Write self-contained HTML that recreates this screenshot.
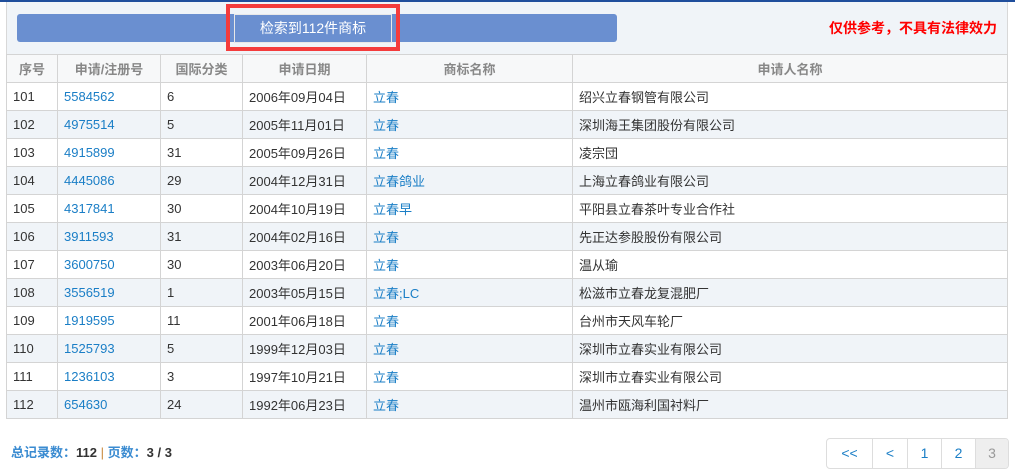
<!DOCTYPE html><html><head><meta charset="utf-8"><style>
*{box-sizing:border-box;margin:0;padding:0}
body{width:1015px;height:474px;background:#fff;font-family:"Liberation Sans","Noto Sans CJK SC",sans-serif;font-size:13px;color:#333;position:relative;overflow:hidden}
.topline{position:absolute;left:0;top:0;width:1015px;height:2px;background:#1f4e9c}
.panel{position:absolute;left:6px;top:2px;width:1002px;height:53px;background:#f0f4f8;border-left:1px solid #d8d8d8;border-right:1px solid #d8d8d8}
.bar{position:absolute;left:17px;top:14px;width:600px;height:28px;background:#6a8fd0;border-radius:3px}
.red{position:absolute;left:226px;top:4px;width:174px;height:47px;border:4px solid #f43c3c}
.red span{position:absolute;left:4px;top:6px;width:158px;height:29px;border:1px solid #e8e8e8;color:#fff;font-size:14px;text-align:center;line-height:27px}
.note{position:absolute;left:829px;top:18px;color:#f00;font-weight:bold;font-size:14px}
table{position:absolute;left:6px;top:54px;width:1002px;border-collapse:collapse}
td,th{border:1px solid #d4d4d4;height:28px;padding:0 6px;text-align:left;white-space:nowrap}
th{background:#f7f8f9;color:#888;font-weight:bold;text-align:center;height:28px}
tr:nth-child(odd) td{background:#f0f4f8}
a{color:#1a7ec6;text-decoration:none}
.foot{position:absolute;left:11px;top:442px;color:#3a8bd1;font-weight:bold;font-size:13px}
.foot b{color:#333}
.foot i{font-style:normal;color:#c8883c;font-weight:normal}
.pg{position:absolute;left:826px;top:438px;height:31px;display:flex;border:1px solid #ddd;border-radius:4px;overflow:hidden}
.pg span{border-left:1px solid #ddd;color:#1a7ec6;text-align:center;line-height:29px;font-size:14px}
.pg span:first-child{border-left:none}
</style></head><body>
<div class="topline"></div>
<div class="panel"></div>
<div class="bar"></div>
<div class="red"><span>检索到112件商标</span></div>
<div class="note">仅供参考，不具有法律效力</div>
<table>
<colgroup><col style="width:51px"><col style="width:103px"><col style="width:82px"><col style="width:124px"><col style="width:206px"><col></colgroup>
<tr><th>序号</th><th>申请/注册号</th><th>国际分类</th><th>申请日期</th><th>商标名称</th><th>申请人名称</th></tr>
<tr><td>101</td><td><a>5584562</a></td><td>6</td><td>2006年09月04日</td><td><a>立春</a></td><td>绍兴立春钢管有限公司</td></tr>
<tr><td>102</td><td><a>4975514</a></td><td>5</td><td>2005年11月01日</td><td><a>立春</a></td><td>深圳海王集团股份有限公司</td></tr>
<tr><td>103</td><td><a>4915899</a></td><td>31</td><td>2005年09月26日</td><td><a>立春</a></td><td>凌宗団</td></tr>
<tr><td>104</td><td><a>4445086</a></td><td>29</td><td>2004年12月31日</td><td><a>立春鸽业</a></td><td>上海立春鸽业有限公司</td></tr>
<tr><td>105</td><td><a>4317841</a></td><td>30</td><td>2004年10月19日</td><td><a>立春早</a></td><td>平阳县立春茶叶专业合作社</td></tr>
<tr><td>106</td><td><a>3911593</a></td><td>31</td><td>2004年02月16日</td><td><a>立春</a></td><td>先正达参股股份有限公司</td></tr>
<tr><td>107</td><td><a>3600750</a></td><td>30</td><td>2003年06月20日</td><td><a>立春</a></td><td>温从瑜</td></tr>
<tr><td>108</td><td><a>3556519</a></td><td>1</td><td>2003年05月15日</td><td><a>立春;LC</a></td><td>松滋市立春龙复混肥厂</td></tr>
<tr><td>109</td><td><a>1919595</a></td><td>11</td><td>2001年06月18日</td><td><a>立春</a></td><td>台州市天风车轮厂</td></tr>
<tr><td>110</td><td><a>1525793</a></td><td>5</td><td>1999年12月03日</td><td><a>立春</a></td><td>深圳市立春实业有限公司</td></tr>
<tr><td>111</td><td><a>1236103</a></td><td>3</td><td>1997年10月21日</td><td><a>立春</a></td><td>深圳市立春实业有限公司</td></tr>
<tr><td>112</td><td><a>654630</a></td><td>24</td><td>1992年06月23日</td><td><a>立春</a></td><td>温州市瓯海利国衬料厂</td></tr>
</table>
<div class="foot">总记录数：<b>112</b> <i>|</i> 页数：<b>3 / 3</b></div>
<div class="pg"><span style="width:45px">&lt;&lt;</span><span style="width:35px">&lt;</span><span style="width:34px">1</span><span style="width:34px">2</span><span style="width:33px;background:#eee;color:#999">3</span></div>
</body></html>
